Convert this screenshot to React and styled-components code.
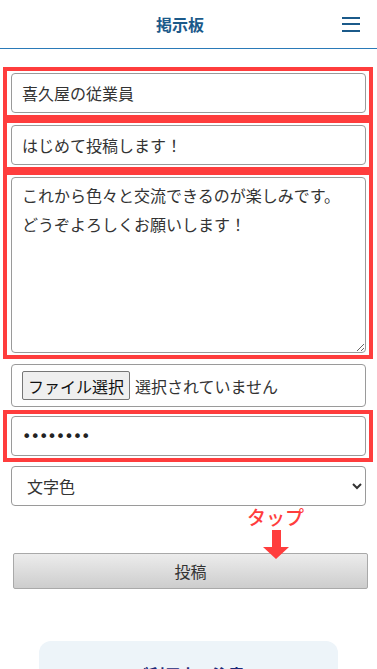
import React from 'react'
import styled, { createGlobalStyle } from 'styled-components'

const GlobalStyle = createGlobalStyle`
  html, body {
    margin: 0;
    padding: 0;
    background: #fff;
    font-family: "Noto Sans CJK JP", "Noto Sans", sans-serif;
    color: #333;
  }
  * {
    box-sizing: border-box;
  }
`

const Page = styled.div`
  width: 377px;
  height: 669px;
  overflow: hidden;
`

const Header = styled.header`
  display: grid;
  grid-template-columns: 1fr auto 1fr;
  align-items: center;
  height: 49px;
  border-bottom: 1px solid #2a7ab8;
  padding: 0 17px 0 0;
`

const Title = styled.h1`
  grid-column: 2;
  margin: 0;
  font-size: 16px;
  font-weight: 700;
  color: #1b5a8a;
  line-height: 1;
`

const MenuButton = styled.button`
  grid-column: 3;
  justify-self: end;
  display: flex;
  flex-direction: column;
  gap: 4.5px;
  width: 18px;
  padding: 0;
  border: 0;
  background: none;
  span {
    display: block;
    height: 2px;
    background: #1b5a8a;
  }
`

const Form = styled.form`
  display: flex;
  flex-direction: column;
  width: 370px;
  margin: 18px 0 0 3px;
`

const Marked = styled.div`
  border: 4px solid #ff3d3d;
  padding: 2px 3px 2px 4px;
  margin-top: ${p => p.gap || 0}px;
`

const Plain = styled.div`
  padding: 0 7px 0 8px;
  margin-top: ${p => p.gap || 0}px;
`

const TextInput = styled.input`
  display: block;
  width: 100%;
  height: 40px;
  border: 1px solid #9a9a9a;
  border-radius: 4px;
  padding: 0 10px;
  font-family: inherit;
  font-size: 16px;
  color: #333;
  background: #fff;
  outline: none;
`

const PasswordInput = styled(TextInput)`
  font-family: "DejaVu Sans", sans-serif;
  font-size: 16px;
  letter-spacing: -1px;
  color: #222;
`

const TextArea = styled.textarea`
  display: block;
  width: 100%;
  height: 176px;
  border: 1px solid #9a9a9a;
  border-radius: 4px;
  padding: 3px 10px;
  font-family: inherit;
  font-size: 16px;
  line-height: 29px;
  color: #333;
  resize: vertical;
  outline: none;
`

const FileBox = styled.label`
  display: flex;
  align-items: center;
  gap: 5px;
  height: 43px;
  border: 1px solid #9a9a9a;
  border-radius: 4px;
  padding: 0 10px;
  font-size: 16px;
  color: #333;
`

const FileButton = styled.span`
  display: inline-flex;
  align-items: center;
  height: 29px;
  padding: 0 5px;
  background: #efefef;
  border: 1px solid #767676;
  border-radius: 2px;
  color: #111;
  font-size: 16px;
`

const Select = styled.select`
  display: block;
  width: 100%;
  height: 40px;
  border: 1px solid #9a9a9a;
  border-radius: 4px;
  padding: 0 8px 0 11px;
  font-family: inherit;
  font-size: 16px;
  color: #333;
  background: #fff;
  outline: none;
`

const SubmitArea = styled.div`
  position: relative;
  margin-top: 47px;
  padding: 0 5px 0 10px;
`

const SubmitButton = styled.button`
  display: block;
  width: 100%;
  height: 36px;
  border: 1px solid #a9a9a9;
  border-radius: 2px;
  background: linear-gradient(#ececec, #cdcdcd);
  font-family: inherit;
  font-size: 16px;
  color: #333;
`

const TapNote = styled.div`
  position: absolute;
  left: 244px;
  top: -46px;
  display: flex;
  flex-direction: column;
  align-items: center;
  color: #ff3d3d;
  font-size: 19px;
  font-weight: 500;
  line-height: 1;
  pointer-events: none;
  svg {
    margin-top: 4px;
  }
`

const InfoCard = styled.section`
  width: 299px;
  margin: 52px 0 0 39px;
  padding: 25px 0 0;
  height: 120px;
  background: #edf4f9;
  border-radius: 12px 12px 0 0;
  text-align: center;
`

const InfoTitle = styled.h2`
  margin: 0;
  font-size: 16px;
  font-weight: 700;
  color: #1d2a78;
  line-height: 1;
`

export default function App() {
  return (
    <Page>
      <GlobalStyle />
      <Header>
        <Title>掲示板</Title>
        <MenuButton type="button" aria-label="メニュー">
          <span />
          <span />
          <span />
        </MenuButton>
      </Header>
      <Form onSubmit={e => e.preventDefault()}>
        <Marked>
          <TextInput type="text" defaultValue="喜久屋の従業員" />
        </Marked>
        <Marked>
          <TextInput type="text" defaultValue="はじめて投稿します！" />
        </Marked>
        <Marked>
          <TextArea defaultValue={'これから色々と交流できるのが楽しみです。\nどうぞよろしくお願いします！'} />
        </Marked>
        <Plain gap={5}>
          <FileBox>
            <FileButton>ファイル選択</FileButton>
            選択されていません
          </FileBox>
        </Plain>
        <Marked gap={3}>
          <PasswordInput type="password" defaultValue="12345678" />
        </Marked>
        <Plain gap={4}>
          <Select defaultValue="">
            <option value="">文字色</option>
            <option value="red">赤</option>
            <option value="blue">青</option>
          </Select>
        </Plain>
        <SubmitArea>
          <TapNote>
            タップ
            <svg width="26" height="29" viewBox="0 0 26 29">
              <path d="M9 0h9v17h8L13 29 0 17h9z" fill="#ff3d3d" />
            </svg>
          </TapNote>
          <SubmitButton type="submit">投稿</SubmitButton>
        </SubmitArea>
      </Form>
      <InfoCard>
        <InfoTitle>ご利用上の注意</InfoTitle>
      </InfoCard>
    </Page>
  )
}
